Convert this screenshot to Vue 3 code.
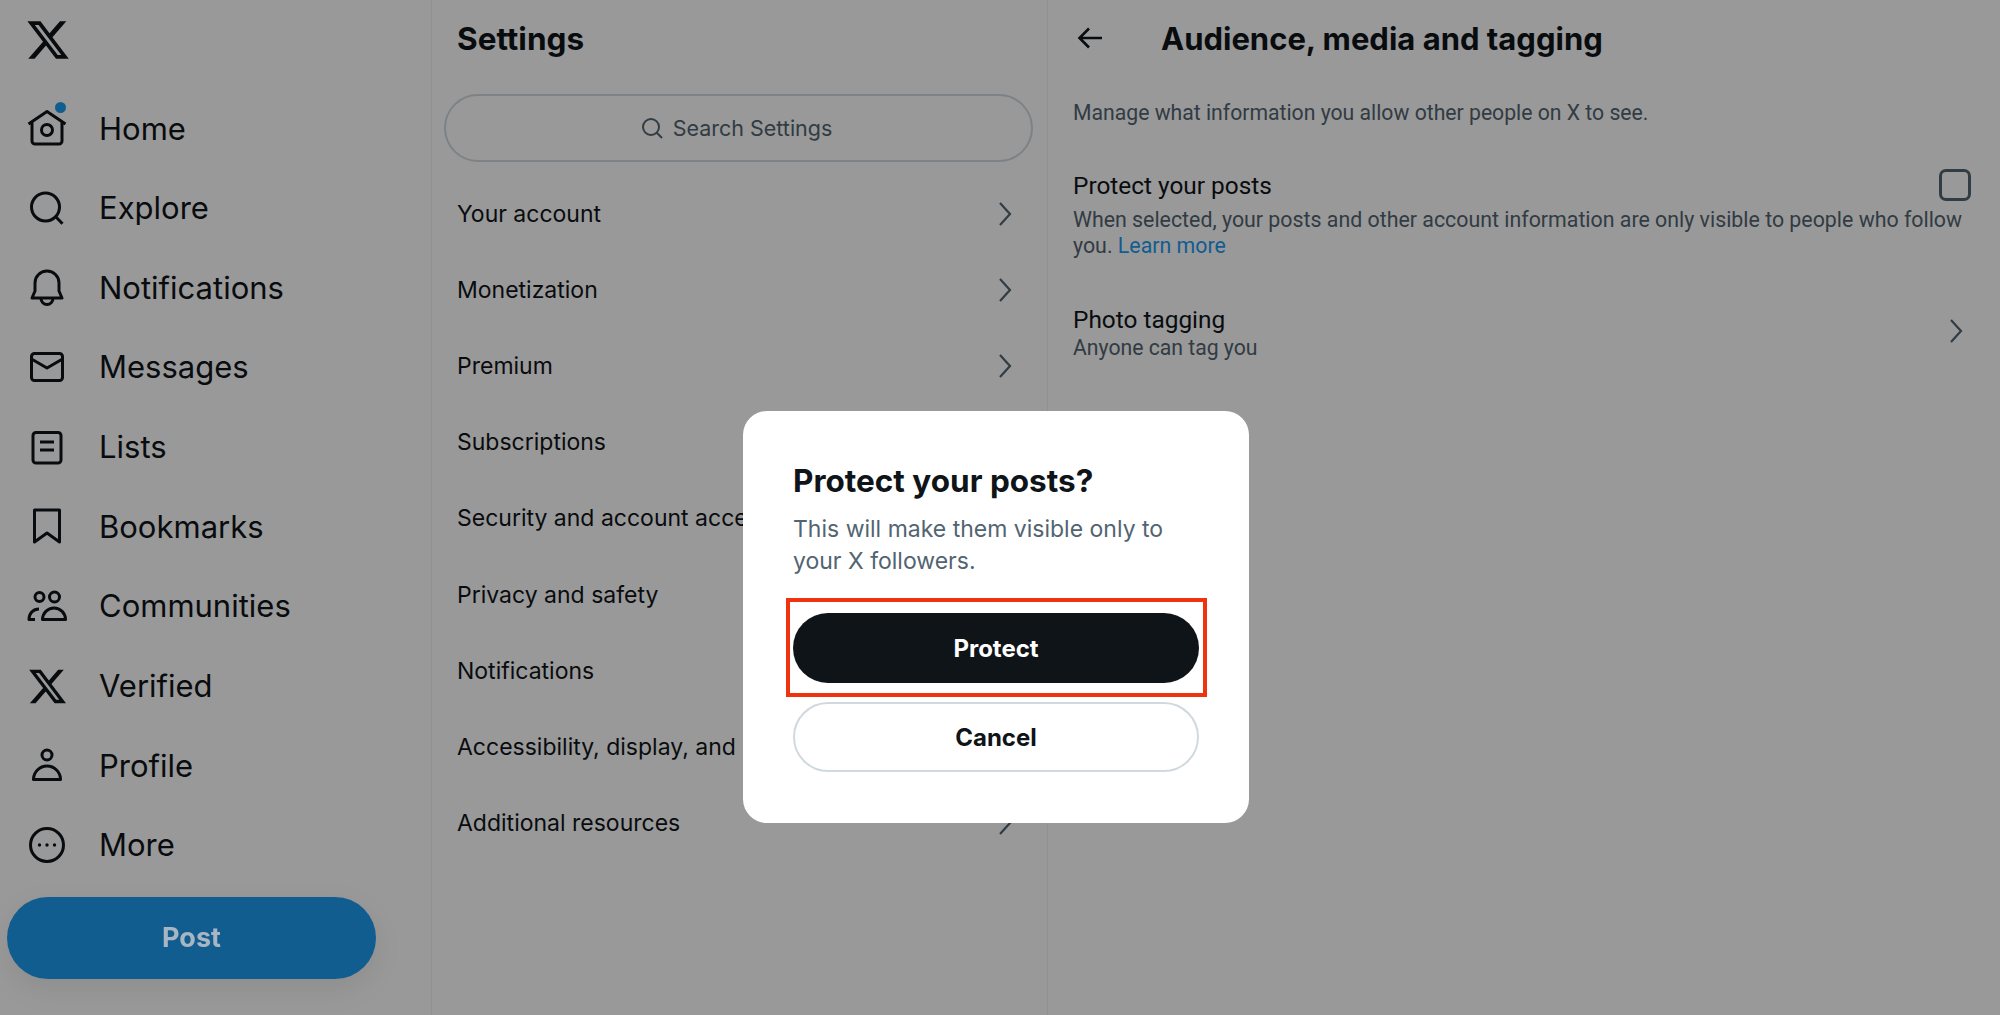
<script setup>
const xLogo = 'M18.244 2.25h3.308l-7.227 8.26 8.502 11.24H16.17l-5.214-6.817L4.99 21.75H1.68l7.73-8.835L1.254 2.25H8.08l4.713 6.231zm-1.161 17.52h1.833L7.084 4.126H5.117z'

const navItems = [
  { label: 'Home', dot: true, d: 'M1.5 16 L20 3.5 L38.5 16 M5 13.5 V33 a3 3 0 0 0 3 3 H32 a3 3 0 0 0 3 -3 V13.5 M14.5 22 a5.5 5.5 0 1 0 11 0 a5.5 5.5 0 1 0 -11 0' },
  { label: 'Explore', d: 'M4.5 19 a14 14 0 1 0 28 0 a14 14 0 1 0 -28 0 M29 29 L35.5 35.7' },
  { label: 'Notifications', d: 'M5 31 L8 24 V16 a12 12 0 0 1 24 0 V24 L35 31 Z M14 31.5 a6 6 0 0 0 12 0' },
  { label: 'Messages', d: 'M7.5 6.5 H32.5 a3 3 0 0 1 3 3 V30.5 a3 3 0 0 1 -3 3 H7.5 a3 3 0 0 1 -3 -3 V9.5 a3 3 0 0 1 3 -3 Z M4.5 12 L20 21 L35.5 12' },
  { label: 'Lists', d: 'M9 5.5 H31 a3 3 0 0 1 3 3 V33 a3 3 0 0 1 -3 3 H9 a3 3 0 0 1 -3 -3 V8.5 a3 3 0 0 1 3 -3 Z M13 15 H27 M13 23 H27' },
  { label: 'Bookmarks', d: 'M7.5 4 H32.5 V36 L20 27 L7.5 36 Z' },
  { label: 'Communities', d: 'M8 11 a4.5 4.5 0 1 0 9 0 a4.5 4.5 0 1 0 -9 0 M22.5 11 a5 5 0 1 0 10 0 a5 5 0 1 0 -10 0 M15.5 33.5 H38.5 a11.5 11.5 0 0 0 -23 0 Z M8 33.5 H2 c0 -6 4 -10.5 10 -10.5' },
  { label: 'Verified', x: true },
  { label: 'Profile', d: 'M15 10 a5 5 0 1 0 10 0 a5 5 0 1 0 -10 0 M6.5 34.5 H33.5 a13.5 13.5 0 0 0 -27 0 Z' },
  { label: 'More', d: 'M3.5 20 a16.5 16.5 0 1 0 33 0 a16.5 16.5 0 1 0 -33 0', more: true },
]

const settingsItems = [
  'Your account',
  'Monetization',
  'Premium',
  'Subscriptions',
  'Security and account access',
  'Privacy and safety',
  'Notifications',
  'Accessibility, display, and languages',
  'Additional resources',
]
</script>

<template>
  <div class="page">
    <aside class="sidebar">
      <div class="logo">
        <svg class="logo-mark" viewBox="0 0 24 24"><path :d="xLogo" /></svg>
      </div>
      <nav>
        <div v-for="item in navItems" :key="item.label" class="nav-row">
          <span class="nav-icon">
            <svg v-if="item.x" class="nav-x" viewBox="0 0 24 24"><path :d="xLogo" /></svg>
            <svg v-else viewBox="0 0 40 40" fill="none" stroke="#0f1419" stroke-width="3" stroke-linejoin="round">
              <path :d="item.d" />
              <g v-if="item.more" fill="#0f1419" stroke="none">
                <circle cx="12.5" cy="20" r="1.7" />
                <circle cx="20" cy="20" r="1.7" />
                <circle cx="27.5" cy="20" r="1.7" />
              </g>
            </svg>
            <span v-if="item.dot" class="nav-dot"></span>
          </span>
          <span class="nav-label">{{ item.label }}</span>
        </div>
      </nav>
      <button class="post-btn"><span>Post</span></button>
    </aside>

    <section class="settings">
      <h2 class="settings-title">Settings</h2>
      <div class="search">
        <svg viewBox="0 0 24 24" fill="none" stroke="#536471" stroke-width="2"><path d="M3 11 a8 8 0 1 0 16 0 a8 8 0 1 0 -16 0 M17 17 L22 22" /></svg>
        <span>Search Settings</span>
      </div>
      <div v-for="name in settingsItems" :key="name" class="settings-row">
        <span>{{ name }}</span>
        <svg class="chevron" viewBox="0 0 14 26" fill="none" stroke="#536471" stroke-width="2.2"><path d="M2 2 L12 13 L2 24" /></svg>
      </div>
    </section>

    <section class="detail">
      <header class="detail-head">
        <svg class="back" viewBox="0 0 26 24" fill="none" stroke="#0f1419" stroke-width="2.6"><path d="M25 12 H3 M12 2.5 L2.5 12 L12 21.5" /></svg>
        <h2>Audience, media and tagging</h2>
      </header>
      <p class="detail-desc">Manage what information you allow other people on X to see.</p>
      <div class="option">
        <div class="option-top">
          <span>Protect your posts</span>
          <span class="checkbox"></span>
        </div>
        <p class="option-text">When selected, your posts and other account information are only visible to people who follow you. <span class="link">Learn more</span></p>
      </div>
      <div class="tagging">
        <div>
          <div class="tagging-name">Photo tagging</div>
          <div class="tagging-sub">Anyone can tag you</div>
        </div>
        <svg class="chevron" viewBox="0 0 14 26" fill="none" stroke="#536471" stroke-width="2.2"><path d="M2 2 L12 13 L2 24" /></svg>
      </div>
    </section>

    <div class="overlay">
      <div class="modal">
        <h3>Protect your posts?</h3>
        <p>This will make them visible only to your X followers.</p>
        <div class="highlighted">
          <button class="btn-primary">Protect</button>
          <span class="highlight-box"></span>
        </div>
        <button class="btn-cancel">Cancel</button>
      </div>
    </div>
  </div>
</template>

<style scoped>
.page {
  display: flex;
  height: 1015px;
  overflow: hidden;
  background: #fff;
  color: #0f1419;
  font-family: Inter, "Liberation Sans", sans-serif;
}
.sidebar {
  width: 431px;
  flex: none;
}
.logo {
  height: 88.2px;
  padding: 17px 0 0 25px;
  box-sizing: border-box;
}
.logo-mark {
  display: block;
  width: 46px;
  height: 46px;
  fill: #0f1419;
}
.nav-row {
  height: 79.66px;
  display: flex;
  align-items: center;
  padding-left: 27px;
}
.nav-icon {
  position: relative;
  width: 40px;
  height: 40px;
  margin-right: 32px;
}
.nav-icon svg {
  display: block;
  width: 40px;
  height: 40px;
}
.nav-icon .nav-x {
  fill: #0f1419;
  width: 41px;
  height: 41px;
}
.nav-dot {
  position: absolute;
  top: -6px;
  left: 28px;
  width: 11px;
  height: 11px;
  border-radius: 50%;
  background: #1d9bf0;
}
.nav-label {
  font-size: 31px;
}
.post-btn {
  display: block;
  width: 369px;
  height: 82px;
  margin: 12px 0 0 7px;
  border: none;
  border-radius: 41px;
  background: #1d9bf0;
  font: 700 27px Inter, "Liberation Sans", sans-serif;
  box-shadow: 0 10px 30px rgba(0, 0, 0, 0.08);
}
/* the label reads lighter than the dimmed white would be, so it sits above the overlay */
.post-btn span {
  position: relative;
  z-index: 2;
  color: #a8b5c2;
}
.settings {
  width: 617px;
  flex: none;
  box-sizing: border-box;
  border-left: 1px solid #eff3f4;
  border-right: 1px solid #eff3f4;
  padding: 0 14px 0 12px;
}
.settings-title {
  margin: 0;
  padding-left: 13px;
  font-size: 31.5px;
  line-height: 78px;
  font-weight: 700;
}
.search {
  height: 68px;
  margin-top: 16px;
  padding-right: 5px;
  box-sizing: border-box;
  border: 2px solid #cfd9de;
  border-radius: 34px;
  display: flex;
  align-items: center;
  justify-content: center;
  gap: 9px;
  color: #536471;
  font-size: 21.5px;
}
.search svg {
  width: 24px;
  height: 24px;
}
.settings-row {
  height: 76.1px;
  display: flex;
  align-items: center;
  justify-content: space-between;
  padding: 0 21px 0 13px;
  font-size: 23px;
}
.search + .settings-row {
  margin-top: 14px;
}
.chevron {
  width: 14px;
  height: 26px;
  flex: none;
}
.detail {
  flex: 1;
  min-width: 0;
  padding: 0 29px 0 25px;
  font-family: Roboto, "Liberation Sans", sans-serif;
}
.detail-head {
  display: flex;
  align-items: center;
  height: 76px;
}
.back {
  width: 26px;
  height: 24px;
  margin: 0 58px 0 4px;
}
.detail-head h2 {
  margin: 0;
  font-family: Inter, "Liberation Sans", sans-serif;
  font-size: 31px;
  font-weight: 700;
}
.detail-desc {
  margin: 23px 0 0;
  font-size: 21.2px;
  line-height: 28px;
  color: #536471;
}
.option {
  margin-top: 43px;
}
.option-top {
  display: flex;
  justify-content: space-between;
  align-items: center;
  font-size: 24.4px;
  height: 30px;
}
.checkbox {
  width: 32px;
  height: 32px;
  box-sizing: border-box;
  border: 3px solid #536471;
  border-radius: 7px;
}
.option-text {
  margin: 7px 0 0;
  font-size: 21.35px;
  line-height: 26px;
  color: #536471;
}
.link {
  color: #1d9bf0;
}
.tagging {
  display: flex;
  justify-content: space-between;
  align-items: center;
  margin-top: 46px;
  padding-right: 8px;
}
.tagging .chevron {
  margin-bottom: 4px;
}
.tagging-name {
  font-size: 24.4px;
  line-height: 30px;
}
.tagging-sub {
  font-size: 21.2px;
  line-height: 26px;
  color: #536471;
}
.overlay {
  position: fixed;
  inset: 0;
  background: rgba(0, 0, 0, 0.4);
  display: flex;
  align-items: flex-start;
  justify-content: center;
}
.modal {
  width: 506px;
  height: 412px;
  box-sizing: border-box;
  margin: 411px 8px 0 0;
  padding: 51px 50px 0 50px;
  background: #fff;
  border-radius: 24px;
}
.modal h3 {
  margin: 0;
  font-size: 31.5px;
  line-height: 38px;
  font-weight: 700;
}
.modal p {
  margin: 13px 0 0;
  font-size: 23px;
  line-height: 32px;
  color: #536471;
}
.highlighted {
  position: relative;
  margin-top: 36px;
}
.btn-primary,
.btn-cancel {
  display: block;
  width: 406px;
  height: 70px;
  border-radius: 35px;
  font: 700 24px Inter, "Liberation Sans", sans-serif;
}
.btn-primary {
  border: none;
  background: #0f1419;
  color: #fff;
}
.btn-cancel {
  margin-top: 19px;
  border: 2px solid #cfd9de;
  background: #fff;
  color: #0f1419;
}
.highlight-box {
  position: absolute;
  left: -7px;
  top: -15px;
  width: 421px;
  height: 99px;
  box-sizing: border-box;
  border: 4px solid #f0330f;
}
</style>

<style>
body {
  background: #fff;
}
</style>
